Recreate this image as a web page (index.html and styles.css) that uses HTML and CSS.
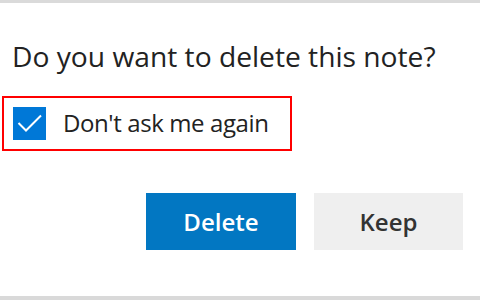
FILE: index.html
```html
<!DOCTYPE html>
<html>
<head>
<meta charset="utf-8">
<link rel="stylesheet" href="styles.css">
</head>
<body>
<div class="dialog">
  <div class="title">Do you want to delete this note?</div>
  <label class="option">
    <span class="checkbox">
      <svg viewBox="0 0 33 33" width="33" height="33"><path d="M5.5 16 L13 23.5 L28 8.5" fill="none" stroke="#fff" stroke-width="2"/></svg>
    </span>
    <span class="option-text">Don't ask me again</span>
  </label>
  <div class="buttons">
    <div class="btn btn-primary">Delete</div>
    <div class="btn btn-secondary">Keep</div>
  </div>
</div>
</body>
</html>
```
FILE: styles.css
```css
html, body {
  margin: 0;
  padding: 0;
  background: #fff;
}
.dialog {
  width: 480px;
  height: 300px;
  box-sizing: border-box;
  border-top: 3px solid #dadada;
  border-bottom: 4px solid #d9d9d9;
  display: flex;
  flex-direction: column;
  font-family: "Open Sans", "Noto Sans", sans-serif;
  color: #222;
}
.title {
  margin: 35px 0 0 12px;
  font-size: 28.2px;
  line-height: 36px;
  white-space: nowrap;
}
.option {
  margin: 22px 0 0 2px;
  width: 290px;
  height: 55px;
  box-sizing: border-box;
  border: 2px solid #ff0000;
  display: flex;
  align-items: center;
  padding-left: 9px;
}
.checkbox {
  width: 33px;
  height: 33px;
  background: #0078d7;
  display: flex;
}
.option-text {
  margin-left: 17px;
  padding-bottom: 3px;
  font-size: 24px;
  letter-spacing: -0.4px;
  line-height: 33px;
}
.buttons {
  margin-top: 42px;
  display: flex;
  justify-content: flex-end;
  gap: 18px;
  padding-right: 17px;
}
.btn {
  width: 150px;
  height: 57px;
  display: flex;
  align-items: center;
  justify-content: center;
  font-size: 24px;
  font-weight: 600;
}
.btn-primary {
  background: #0277c2;
  color: #fff;
}
.btn-secondary {
  width: 149px;
  background: #efefef;
  color: #333;
}
```
